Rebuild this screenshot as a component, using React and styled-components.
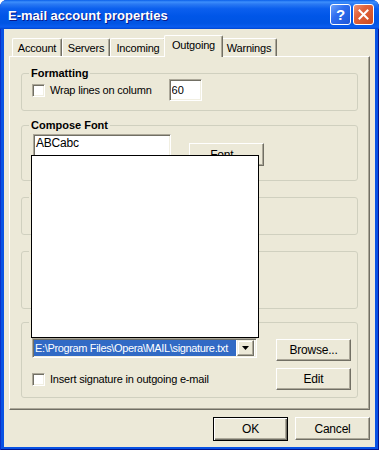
import React from 'react'
import styled, {createGlobalStyle} from 'styled-components'

const GlobalStyle = createGlobalStyle`
  html, body {
    margin: 0;
    padding: 0;
    background: #fff;
  }
  body {
    font-family: "Liberation Sans", Arial, sans-serif;
    font-size: 11px;
    letter-spacing: -0.2px;
    color: #000;
  }
`

const Window = styled.div`
  width: 379px;
  height: 450px;
  display: flex;
  flex-direction: column;
  background: #0852e4;
  border-radius: 7px 7px 0 0;
  box-shadow: inset 1px 0 #0a30c8, inset -1px -1px #00138c;
  overflow: hidden;
`

const TitleBar = styled.div`
  height: 29px;
  flex-shrink: 0;
  display: flex;
  align-items: center;
  padding: 0 5px 0 8px;
  background: linear-gradient(
    to bottom,
    #0a5fe9 0%,
    #3d8ffc 7%,
    #2a79f3 14%,
    #0b5fee 30%,
    #0056e8 55%,
    #0054e3 80%,
    #0a5df0 93%,
    #0044d0 100%
  );
`

const Title = styled.div`
  flex: 1;
  color: #fff;
  font-family: "Liberation Sans", Arial, sans-serif;
  font-weight: bold;
  font-size: 13px;
  letter-spacing: 0;
  text-shadow: 1px 1px #0a1a8a;
  padding-top: 1px;
`

const CaptionButton = styled.div`
  width: 21px;
  height: 21px;
  box-sizing: border-box;
  margin-left: 2px;
  border: 1px solid #fff;
  border-radius: 3px;
  display: flex;
  align-items: center;
  justify-content: center;
  color: #fff;
  font-weight: bold;
  font-size: 15px;
  background: ${p => p.$close
    ? 'linear-gradient(135deg, #f09476 0%, #e2643d 35%, #cc4a1f 100%)'
    : 'linear-gradient(135deg, #6ea3fb 0%, #2f6ef0 40%, #1d56d8 100%)'};
`

const Client = styled.div`
  flex: 1;
  margin: 0 4px 4px 4px;
  background: #ece9d8;
  display: flex;
  flex-direction: column;
  padding: 6px 0 6px 0;
`

const TabRow = styled.div`
  height: 22px;
  display: flex;
  align-items: flex-end;
  margin: 0 0 -1px 8px;
  position: relative;
  z-index: 1;
`

const Tab = styled.div`
  width: ${p => p.$w}px;
  box-sizing: border-box;
  height: ${p => (p.$active ? 22 : 18)}px;
  margin: ${p => (p.$active ? '0 -2px' : '0 0 1px 0')};
  position: relative;
  z-index: ${p => (p.$active ? 2 : 1)};
  border-top: 1px solid #fff;
  border-left: 1px solid #fff;
  border-right: 1px solid #716f64;
  border-radius: 2px 2px 0 0;
  box-shadow: inset -1px 0 #aca899;
  background: #ece9d8;
  display: flex;
  align-items: center;
  justify-content: center;
  padding-bottom: ${p => (p.$active ? 3 : 0)}px;
  white-space: nowrap;
`

const Panel = styled.div`
  height: 354px;
  box-sizing: border-box;
  margin: 0 5px;
  border-top: 1px solid #fff;
  border-left: 1px solid #fff;
  border-right: 1px solid #716f64;
  border-bottom: 1px solid #716f64;
  box-shadow: inset -1px -1px #aca899;
  padding: 11px 11px 0 11px;
  display: flex;
  flex-direction: column;
`

const Group = styled.fieldset`
  margin: ${p => p.$mt || 0}px 0 0 0;
  padding: 0 6px ${p => p.$pb || 9}px 10px;
  border: 1px solid #d0d0bf;
  border-radius: 3px;
  min-width: 0;
`

const Legend = styled.legend`
  font-weight: bold;
  font-size: 11px;
  line-height: 11px;
  letter-spacing: 0;
  padding: 0 2px;
  margin-left: -3px;
  background: #ece9d8;
`

const Row = styled.div`
  display: flex;
  align-items: ${p => p.$align || 'center'};
  height: ${p => p.$h || 22}px;
  margin-top: ${p => p.$mt || 0}px;
`

const Spacer = styled.div`
  height: ${p => p.$h}px;
`

const CheckBox = styled.span`
  width: 13px;
  height: 13px;
  box-sizing: border-box;
  flex-shrink: 0;
  background: #fff;
  border: 1px solid;
  border-color: #aca899 #fff #fff #aca899;
  box-shadow: inset 1px 1px #716f64, inset -1px -1px #f1efe2;
  margin-right: 5px;
`

const Label = styled.span`
  white-space: nowrap;
`

const Field = styled.input`
  width: 33px;
  height: 22px;
  box-sizing: border-box;
  margin: 0 0 0 17px;
  padding: 0 2px;
  font-family: "Liberation Sans", Arial, sans-serif;
  font-size: 11px;
  color: #000;
  background: #fff;
  border: 1px solid;
  border-color: #aca899 #fff #fff #aca899;
  box-shadow: inset 1px 1px #716f64, inset -1px -1px #f1efe2;
  outline: none;
`

const Preview = styled.div`
  width: 138px;
  height: 38px;
  box-sizing: border-box;
  margin: 3px 0 0 1px;
  padding: 1px 2px;
  background: #fff;
  border: 1px solid;
  border-color: #aca899 #fff #fff #aca899;
  box-shadow: inset 1px 1px #716f64, inset -1px -1px #f1efe2;
  font-size: 12px;
`

const Button = styled.div`
  width: 75px;
  height: ${p => p.$h || 22}px;
  box-sizing: border-box;
  flex-shrink: 0;
  margin-top: ${p => p.$mt || 0}px;
  margin-left: ${p => (p.$push ? 'auto' : `${p.$ml || 0}px`)};
  display: flex;
  align-items: center;
  justify-content: center;
  background: #ece9d8;
  border: 1px solid;
  border-color: ${p => (p.$default ? '#000' : '#fff #716f64 #716f64 #fff')};
  box-shadow: ${p => (p.$default
    ? 'inset 1px 1px #fff, inset -1px -1px #716f64, inset -2px -2px #aca899'
    : 'inset -1px -1px #aca899')};
  font-size: 12px;
  white-space: nowrap;
`

const ComboWrap = styled.div`
  position: relative;
  width: 225px;
  height: 20px;
  box-sizing: border-box;
  display: flex;
  background: #fff;
  border: 1px solid;
  border-color: #aca899 #fff #fff #aca899;
  box-shadow: inset 1px 1px #716f64, inset -1px -1px #f1efe2;
  padding: 1px 2px 1px 1px;
`

const Selected = styled.div`
  flex: 1;
  overflow: hidden;
  white-space: nowrap;
  background: #316ac5;
  color: #fff;
  font-size: 11px;
  letter-spacing: -0.35px;
  line-height: 16px;
  padding-left: 1px;
`

const ArrowBtn = styled.div`
  width: 17px;
  height: 16px;
  box-sizing: border-box;
  margin-left: 1px;
  background: #ece9d8;
  border: 1px solid;
  border-color: #f1efe2 #716f64 #716f64 #f1efe2;
  box-shadow: inset -1px -1px #aca899, inset 1px 1px #fff;
  display: flex;
  align-items: center;
  justify-content: center;
`

const DropList = styled.div`
  position: absolute;
  left: -2px;
  bottom: calc(100% + 1px);
  width: 228px;
  height: 183px;
  box-sizing: border-box;
  background: #fff;
  border: 1px solid #000;
  z-index: 10;
`

const Footer = styled.div`
  display: flex;
  justify-content: flex-end;
  gap: 7px;
  margin-top: 7px;
  padding-right: 5px;
`

const CloseIcon = () => (
  <svg width="11" height="11" viewBox="0 0 11 11">
    <path d="M1.5 1.5 L9.5 9.5 M9.5 1.5 L1.5 9.5" stroke="#fff" strokeWidth="2" strokeLinecap="square" />
  </svg>
)

const DownArrow = () => (
  <svg width="7" height="4" viewBox="0 0 7 4">
    <path d="M0 0 H7 L3.5 4 Z" fill="#000" />
  </svg>
)

const tabs = [
  {name: 'Account', w: 50},
  {name: 'Servers', w: 48},
  {name: 'Incoming', w: 56},
  {name: 'Outgoing', w: 59, active: true},
  {name: 'Warnings', w: 56},
]

export default function App() {
  return (
    <>
      <GlobalStyle />
      <Window>
        <TitleBar>
          <Title>E-mail account properties</Title>
          <CaptionButton>?</CaptionButton>
          <CaptionButton $close><CloseIcon /></CaptionButton>
        </TitleBar>
        <Client>
          <TabRow>
            {tabs.map(t => (
              <Tab key={t.name} $w={t.w} $active={t.active}>{t.name}</Tab>
            ))}
          </TabRow>
          <Panel>
            <Group>
              <Legend>Formatting</Legend>
              <Row>
                <CheckBox />
                <Label>Wrap lines on column</Label>
                <Field readOnly defaultValue="60" />
              </Row>
            </Group>

            <Group $mt={9} $pb={8}>
              <Legend>Compose Font</Legend>
              <Row $h={41} $align="flex-start">
                <Preview>ABCabc</Preview>
                <Button $h={23} $mt={12} $ml={18}>Font...</Button>
              </Row>
            </Group>

            <Group $mt={11}>
              <Legend>Text</Legend>
              <Spacer $h={22} />
            </Group>

            <Group $mt={11}>
              <Legend>Quoting</Legend>
              <Spacer $h={42} />
            </Group>

            <Group $mt={8} $pb={7}>
              <Legend>Signature</Legend>
              <Spacer $h={10} />
              <Row $align="flex-start">
                <ComboWrap>
                  <Selected>{'E:\\Program Files\\Opera\\MAIL\\signature.txt'}</Selected>
                  <ArrowBtn><DownArrow /></ArrowBtn>
                  <DropList />
                </ComboWrap>
                <Button $mt={1} $ml={19}>Browse...</Button>
              </Row>
              <Row $mt={8}>
                <CheckBox />
                <Label>Insert signature in outgoing e-mail</Label>
                <Button $push>Edit</Button>
              </Row>
            </Group>
          </Panel>
          <Footer>
            <Button $default $h={24}>OK</Button>
            <Button $h={23}>Cancel</Button>
          </Footer>
        </Client>
      </Window>
    </>
  )
}
